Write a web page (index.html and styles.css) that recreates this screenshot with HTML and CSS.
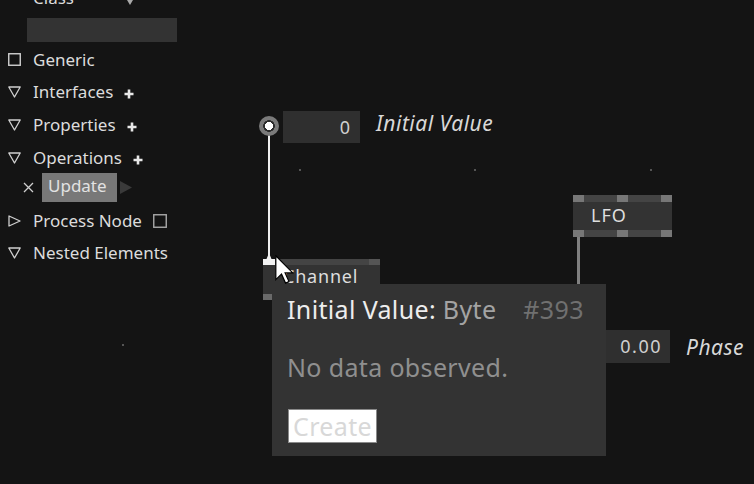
FILE: index.html
```html
<!DOCTYPE html>
<html>
<head>
<meta charset="utf-8">
<title>Editor</title>
<link rel="stylesheet" href="styles.css">
</head>
<body>
<div class="app">
  <div class="canvas">
    <span class="dot d1"></span>
    <span class="dot d2"></span>
    <span class="dot d3"></span>
    <span class="dot d4"></span>

    <div class="wire wire-white"></div>
    <div class="port-in"></div>
    <div class="val val-init">0</div>
    <div class="lbl lbl-init">Initial Value</div>

    <div class="node channel">
      <div class="bar"><span class="pin pin-dim"></span></div>
      <div class="node-body">Channel</div>
      <div class="bar bar-bottom"><span class="pin pin-gray"></span></div>
    </div>
    <svg class="port-white" width="12" height="13" viewBox="0 0 12 13"><path d="M0 13V7H3.5L6 1L8.5 7H12V13Z" fill="#f2f2f2"/></svg>

    <div class="node lfo">
      <div class="bar bar-lfo"><span class="pin"></span><span class="pin"></span><span class="pin"></span></div>
      <div class="node-body lfo-body">LFO</div>
      <div class="bar bar-lfo"><span class="pin"></span><span class="pin"></span><span class="pin"></span></div>
    </div>
    <div class="wire wire-gray"></div>

    <div class="val val-phase">0.00</div>
    <div class="lbl lbl-phase">Phase</div>

    <div class="tooltip">
      <div class="tt-title"><span class="tt-name">Initial Value:</span> <span class="tt-type">Byte</span><span class="tt-id">#393</span></div>
      <div class="tt-msg">No data observed.</div>
      <div class="tt-btn">Create</div>
    </div>

    <svg class="cursor" width="19" height="29" viewBox="0 0 12.6 19.4"><path d="M0.5 0.5V16.5L4.3 12.8L7 18.8L9.3 17.8L6.7 12H11.8Z" fill="#fff" stroke="#000" stroke-width="0.8" stroke-linejoin="miter"/></svg>
  </div>

  <aside class="sidebar">
    <div class="class-row"><span class="class-label">Class</span><svg class="dd" width="6" height="5" viewBox="0 0 6 5"><path d="M0 0H6L3 5Z"/></svg></div>
    <div class="class-input"></div>

    <div class="row r-generic">
      <span class="ico"><svg width="13" height="13" viewBox="0 0 13 13"><rect x="0.75" y="0.75" width="11.5" height="11.5" fill="none" stroke="#d0d0d0" stroke-width="1.4"/></svg></span>
      <span>Generic</span>
    </div>
    <div class="row">
      <span class="ico"><svg width="13" height="12" viewBox="0 0 13 12"><path d="M0.8 1H12.2L6.5 11Z" fill="none" stroke="#d0d0d0" stroke-width="1.3" stroke-linejoin="round"/></svg></span>
      <span>Interfaces</span>
      <svg class="plus" width="10" height="10" viewBox="0 0 10 10"><path d="M5 0.5V9.5M0.5 5H9.5" stroke="#e8e8e8" stroke-width="2.6"/></svg>
    </div>
    <div class="row">
      <span class="ico"><svg width="13" height="12" viewBox="0 0 13 12"><path d="M0.8 1H12.2L6.5 11Z" fill="none" stroke="#d0d0d0" stroke-width="1.3" stroke-linejoin="round"/></svg></span>
      <span>Properties</span>
      <svg class="plus" width="10" height="10" viewBox="0 0 10 10"><path d="M5 0.5V9.5M0.5 5H9.5" stroke="#e8e8e8" stroke-width="2.6"/></svg>
    </div>
    <div class="row">
      <span class="ico"><svg width="13" height="12" viewBox="0 0 13 12"><path d="M0.8 1H12.2L6.5 11Z" fill="none" stroke="#d0d0d0" stroke-width="1.3" stroke-linejoin="round"/></svg></span>
      <span>Operations</span>
      <svg class="plus" width="10" height="10" viewBox="0 0 10 10"><path d="M5 0.5V9.5M0.5 5H9.5" stroke="#e8e8e8" stroke-width="2.6"/></svg>
    </div>
    <div class="upd">
      <svg class="x" width="11" height="11" viewBox="0 0 11 11"><path d="M1 1L10 10M10 1L1 10" stroke="#cfcfcf" stroke-width="1.3"/></svg>
      <span class="upd-box">Update</span>
      <svg class="play" width="12" height="13" viewBox="0 0 12 13"><path d="M0 0L12 6.5L0 13Z" fill="#3a3a3a"/></svg>
    </div>
    <div class="row r-process">
      <span class="ico"><svg width="13" height="12" viewBox="0 0 13 12"><path d="M1 1L12 6L1 11Z" fill="none" stroke="#d0d0d0" stroke-width="1.3" stroke-linejoin="round"/></svg></span>
      <span>Process Node</span>
      <svg class="chk" width="14" height="14" viewBox="0 0 14 14"><rect x="0.75" y="0.75" width="12.5" height="12.5" fill="none" stroke="#a8a8a8" stroke-width="1.4"/></svg>
    </div>
    <div class="row r-nested">
      <span class="ico"><svg width="13" height="12" viewBox="0 0 13 12"><path d="M0.8 1H12.2L6.5 11Z" fill="none" stroke="#d0d0d0" stroke-width="1.3" stroke-linejoin="round"/></svg></span>
      <span>Nested Elements</span>
    </div>
  </aside>
</div>
</body>
</html>
```

FILE: styles.css
```css
* { box-sizing: border-box; margin: 0; padding: 0; }
html, body { width: 754px; height: 484px; overflow: hidden; background: #141414; }
body { font-family: "Noto Sans", "Open Sans", sans-serif; color: #dcdcdc; }

.app { position: relative; width: 754px; height: 484px; overflow: hidden; }
.canvas { position: absolute; inset: 0; }

/* sidebar */
.sidebar { position: relative; z-index: 1; width: 190px; display: flex; flex-direction: column; font-size: 17px; }
.class-row { margin-top: -19px; height: 33px; line-height: 33px; display: flex; align-items: center; padding-left: 33px; }
.class-label { width: 94px; }
.dd { fill: #a8a8a8; margin-top: 10px; }
.class-input { margin: 4px 0 0 27px; width: 150px; height: 24px; background: #333; }

.row { display: flex; align-items: center; height: 33px; line-height: 33px; white-space: nowrap; }
.ico { width: 33px; padding-left: 8px; display: flex; align-items: center; flex: none; }
.r-generic { margin-top: 2px; height: 31px; line-height: 31px; }
.plus { margin-left: 11px; margin-top: 4px; }
.upd { display: flex; align-items: center; height: 29px; margin-top: -1px; padding-left: 23px; }
.x { margin-right: 8px; }
.upd-box { width: 75px; height: 29px; line-height: 25px; padding: 0 0 4px 6px; background: #787878; color: #e2e2e2; }
.play { margin-left: 3px; }
.r-process { margin-top: 2px; }
.chk { margin-left: 11px; }
.r-nested { margin-top: -1px; }

/* canvas items */
.dot { position: absolute; width: 2px; height: 2px; background: #555; }
.d1 { left: 299px; top: 169px; }
.d2 { left: 474px; top: 169px; }
.d3 { left: 650px; top: 169px; }
.d4 { left: 122px; top: 344px; }

.wire { position: absolute; }
.wire-white { left: 268px; top: 134px; width: 2px; height: 122px; background: #f0f0f0; }
.wire-gray { left: 577px; top: 237px; width: 3px; height: 47px; background: #808080; }

.port-in { position: absolute; left: 259px; top: 116px; width: 20px; height: 20px; border-radius: 50%;
  background: radial-gradient(circle, #fff 0 4px, #2a2a2a 4.2px 5.6px, #7a7a7a 6px); }

.val { position: absolute; background: #2f2f2f; color: #d0d0d0; font-size: 18px; text-align: right; }
.val-init { left: 283px; top: 111px; width: 77px; height: 32px; line-height: 32px; padding-right: 10px; }
.val-phase { left: 605px; top: 330px; width: 65px; height: 33px; line-height: 33px; padding-right: 8px; letter-spacing: 1.5px; }

.lbl { position: absolute; font-style: italic; font-size: 21px; line-height: 28px; letter-spacing: 0.5px; color: #d8d8d8; white-space: nowrap; }
.lbl-init { left: 376px; top: 109px; }
.lbl-phase { left: 686px; top: 333px; }

.node { position: absolute; display: flex; flex-direction: column; background: #333; }
.bar { display: flex; justify-content: space-between; background: #444; }
.pin { width: 11px; background: #777; }
.channel { left: 263px; top: 259px; width: 117px; height: 41px; }
.channel .bar { height: 6px; justify-content: flex-end; }
.channel .bar-bottom { justify-content: flex-start; }
.pin-dim { background: #555; }
.pin-gray { width: 9px; background: #6a6a6a; }
.node-body { flex: 1; font-size: 18px; color: #dedede; white-space: nowrap; }
.channel .node-body { padding-left: 20px; line-height: 22px; letter-spacing: 0.8px; }
.port-white { position: absolute; left: 263px; top: 252px; }

.lfo { left: 573px; top: 195px; width: 99px; height: 42px; }
.bar-lfo { height: 7px; }
.lfo-body { padding-left: 18px; line-height: 26px; letter-spacing: 1px; }

.tooltip { position: absolute; left: 272px; top: 284px; width: 334px; height: 172px; background: #333;
  padding: 8px 0 0 15px; font-size: 25px; letter-spacing: 0.35px; display: flex; flex-direction: column; align-items: flex-start; z-index: 2; }
.tt-title { line-height: 34px; color: #ededed; white-space: nowrap; }
.tt-type { color: #a3a3a3; }
.tt-id { color: #707070; margin-left: 27px; }
.tt-msg { margin-top: 24px; line-height: 34px; color: #8f8f8f; white-space: nowrap; }
.tt-btn { margin-top: 25px; margin-left: 1px; height: 34px; line-height: 32px; padding: 0 4px 0 4px;
  background: #fff; border: 1px solid #8a8a8a; color: #d8d8d8; }

.cursor { position: absolute; left: 275px; top: 255px; z-index: 3; }
```
